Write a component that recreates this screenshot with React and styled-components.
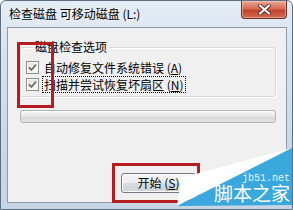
import React from "react";
import styled, { createGlobalStyle } from "styled-components";

const GlobalStyle = createGlobalStyle`
  html, body {
    margin: 0;
    padding: 0;
    background: #ffffff;
  }
  body {
    font-family: "Noto Sans CJK SC", "Noto Sans", sans-serif;
    font-size: 12px;
    color: #000;
  }
`;

const Window = styled.div`
  position: relative;
  width: 293px;
  height: 210px;
  box-sizing: border-box;
  display: flex;
  flex-direction: column;
  padding: 0 5px 6px 6px;
  border: 1px solid #5f6f82;
  border-radius: 6px 6px 0 0;
  background: linear-gradient(
    180deg,
    #e4ecf5 0%,
    #d6e1ed 30%,
    #cad8e7 70%,
    #c6d4e4 100%
  );
  overflow: hidden;
`;

const TitleBar = styled.div`
  height: 26px;
  display: flex;
  align-items: flex-start;
  justify-content: space-between;
  padding-left: 2px;
`;

const Title = styled.div`
  align-self: center;
  line-height: 16px;
  font-size: 12px;
  color: #000;
  white-space: nowrap;
  text-shadow: 0 0 6px rgba(255, 255, 255, 0.9);
`;

const CloseButton = styled.div`
  width: 46px;
  height: 18px;
  box-sizing: border-box;
  display: flex;
  align-items: center;
  justify-content: center;
  border: 1px solid #6e2f27;
  border-top: none;
  border-radius: 0 0 4px 4px;
  background: linear-gradient(
    180deg,
    #eaa898 0%,
    #d86b55 45%,
    #c2442e 55%,
    #d06b4f 100%
  );
  box-shadow: inset 0 0 0 1px rgba(255, 220, 210, 0.45);
`;

const Client = styled.div`
  flex: 1;
  display: flex;
  flex-direction: column;
  border: 1px solid #8e9aa7;
  background: #f0f0f0;
`;

const GroupBox = styled.fieldset`
  margin: 12px 10px 0 12px;
  padding: 5px 0 3px 5px;
  border: 1px solid #d5d9dd;
  border-radius: 3px;
  box-shadow: inset 1px 1px 0 #ffffff, 1px 1px 0 #ffffff;
  min-width: 0;
`;

const Legend = styled.legend`
  margin-left: 7px;
  padding: 0 2px;
  line-height: 14px;
  font-size: 12px;
`;

const Option = styled.div`
  display: flex;
  align-items: center;
  height: 17px;
  gap: 4px;
`;

const CheckBox = styled.span`
  width: 13px;
  height: 13px;
  box-sizing: border-box;
  flex: none;
  display: flex;
  align-items: center;
  justify-content: center;
  border: 1px solid #8f8f8f;
  background: linear-gradient(135deg, #dcdcdc 0%, #f4f4f4 60%, #ffffff 100%);
  box-shadow: inset 0 0 0 1px #f7f7f7;
`;

const Label = styled.span`
  line-height: 15px;
  white-space: nowrap;
  padding: 0 1px;
  outline: ${(p) => (p.$focused ? "1px dotted #000" : "none")};
`;

const Accel = styled.u`
  text-underline-offset: 1px;
`;

const Progress = styled.div`
  height: 11px;
  margin: 13px 10px 0 12px;
  border: 1px solid #b4b4b4;
  border-radius: 3px;
  background: linear-gradient(
    180deg,
    #f6f6f6 0%,
    #e9e9e9 45%,
    #d9d9d9 55%,
    #e4e4e4 100%
  );
  box-shadow: inset 0 1px 0 #ffffff;
`;

const Footer = styled.div`
  margin-top: auto;
  display: flex;
  padding: 0 0 9px 113px;
`;

const Button = styled.div`
  width: 75px;
  height: 20px;
  box-sizing: border-box;
  display: flex;
  align-items: center;
  justify-content: center;
  border: 1px solid #707a85;
  border-radius: 3px;
  background: linear-gradient(
    180deg,
    #f3f5f8 0%,
    #e9ecf0 48%,
    #d7dce2 52%,
    #cdd3da 100%
  );
  box-shadow: inset 0 0 0 1px #fcfcfc;
  font-size: 12px;
  line-height: 14px;
`;

const Highlight = styled.div`
  position: absolute;
  left: ${(p) => p.$x}px;
  top: ${(p) => p.$y}px;
  width: ${(p) => p.$w}px;
  height: ${(p) => p.$h}px;
  box-sizing: border-box;
  border: 3px solid #b61d21;
`;

const Watermark = styled.div`
  position: absolute;
  left: 170px;
  top: 140px;
  width: 123px;
  height: 70px;
  box-sizing: border-box;
  display: flex;
  flex-direction: column;
  align-items: flex-end;
  padding: 33px 4px 0 0;
`;

const WatermarkShape = styled.svg`
  position: absolute;
  left: 0;
  top: 0;
`;

const SiteUrl = styled.div`
  position: relative;
  font-family: "Liberation Mono", "DejaVu Sans Mono", monospace;
  font-size: 10px;
  line-height: 9px;
  color: #e3f5ff;
`;

const SiteName = styled.div`
  position: relative;
  font-size: 19px;
  line-height: 19px;
  color: #ffffff;
`;

const CheckMark = () => (
  <CheckBox>
    <svg width="9" height="9" viewBox="0 0 9 9">
      <path
        d="M1 4.5 L3.5 7 L8 1.5"
        fill="none"
        stroke="#6a6a6a"
        strokeWidth="1.8"
      />
    </svg>
  </CheckBox>
);

const App = () => (
  <>
    <GlobalStyle />
    <Window>
      <TitleBar>
        <Title>检查磁盘 可移动磁盘 (L:)</Title>
        <CloseButton>
          <svg width="13" height="11" viewBox="0 0 13 11">
            <path
              d="M2 1.5 L11 9.5 M11 1.5 L2 9.5"
              stroke="#5a2a22"
              strokeWidth="4"
              strokeLinecap="round"
            />
            <path
              d="M2 1.5 L11 9.5 M11 1.5 L2 9.5"
              stroke="#ffffff"
              strokeWidth="2.2"
              strokeLinecap="round"
            />
          </svg>
        </CloseButton>
      </TitleBar>
      <Client>
        <GroupBox>
          <Legend>磁盘检查选项</Legend>
          <Option>
            <CheckMark />
            <Label>
              自动修复文件系统错误 (<Accel>A</Accel>)
            </Label>
          </Option>
          <Option>
            <CheckMark />
            <Label $focused>
              扫描并尝试恢复坏扇区 (<Accel>N</Accel>)
            </Label>
          </Option>
        </GroupBox>
        <Progress />
        <Footer>
          <Button>
            开始 (<Accel>S</Accel>)
          </Button>
        </Footer>
      </Client>
      <Highlight $x={16} $y={41} $w={37} $h={66} />
      <Highlight $x={111} $y={162} $w={88} $h={40} />
      <Watermark>
        <WatermarkShape width="123" height="70" viewBox="0 0 123 70">
          <polygon points="6,65 10,37 121,7" fill="#ffffff" />
          <polygon points="6,65 121,7 121,64" fill="#3aa7dd" />
        </WatermarkShape>
        <SiteUrl>jb51.net</SiteUrl>
        <SiteName>脚本之家</SiteName>
      </Watermark>
    </Window>
  </>
);

export default App;
